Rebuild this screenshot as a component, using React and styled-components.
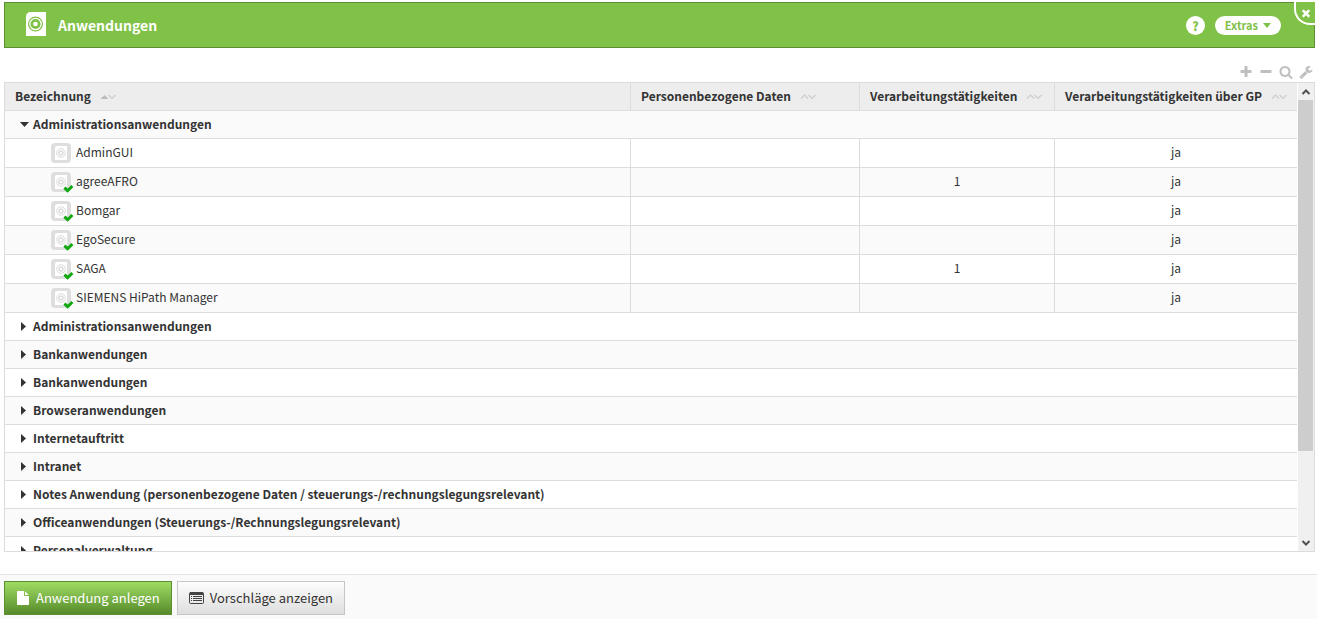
import React from 'react';
import styled, { createGlobalStyle } from 'styled-components';

const COLORS = {
  green: '#80c147',
  greenDark: '#5c8f2f',
  gray50: '#fafafa',
  gray100: '#ededed',
  gray300: '#dcdcdc',
  gray400: '#bfbfbf',
  text: '#333333',
  check: '#0fa80f',
  white: '#ffffff',
};

const PATHS = {
  plus: 'M1600 736v192q0 40-28 68t-68 28h-416v416q0 40-28 68t-68 28h-192q-40 0-68-28t-28-68v-416h-416q-40 0-68-28t-28-68v-192q0-40 28-68t68-28h416v-416q0-40 28-68t68-28h192q40 0 68 28t28 68v416h416q40 0 68 28t28 68z',
  minus: 'M1600 736v192q0 40-28 68t-68 28h-1216q-40 0-68-28t-28-68v-192q0-40 28-68t68-28h1216q40 0 68 28t28 68z',
  search: 'M1216 832q0-185-131.5-316.5t-316.5-131.5-316.5 131.5-131.5 316.5 131.5 316.5 316.5 131.5 316.5-131.5 131.5-316.5zm512 832q0 52-38 90t-90 38q-54 0-90-38l-343-342q-179 124-399 124-143 0-273.5-55.5t-225-150-150-225-55.5-273.5 55.5-273.5 150-225 225-150 273.5-55.5 273.5 55.5 225 150 150 225 55.5 273.5q0 220-124 399l343 343q37 37 37 90z',
  wrench: 'M448 1472q0-26-19-45t-45-19-45 19-19 45 19 45 45 19 45-19 19-45zm644-420l-682 682q-37 37-90 37-52 0-91-37l-106-108q-38-36-38-90 0-53 38-91l681-681q39 98 114.5 173.5t173.5 114.5zm634-435q0 39-23 106-47 134-164.5 217.5t-258.5 83.5q-185 0-316.5-131.5t-131.5-316.5 131.5-316.5 316.5-131.5q58 0 121.5 16.5t107.5 46.5q16 11 16 28t-16 28l-293 169v224l193 107q5-3 79-48.5t135.5-81 70.5-35.5q15 0 23.5 10t8.5 25z',
  times: 'M1490 1322q0 40-28 68l-136 136q-28 28-68 28t-68-28l-294-294-294 294q-28 28-68 28t-68-28l-136-136q-28-28-28-68t28-68l294-294-294-294q-28-28-28-68t28-68l136-136q28-28 68-28t68 28l294 294 294-294q28-28 68-28t68 28l136 136q28 28 28 68t-28 68l-294 294 294 294q28 28 28 68z',
  file: 'M1152 512v-472q22 14 36 28l408 408q14 14 28 36h-472zm-128 32q0 40 28 68t68 28h544v1056q0 40-28 68t-68 28h-1344q-40 0-68-28t-28-68v-1600q0-40 28-68t68-28h800v544z',
};

const GROUPS = [
  {
    name: 'Administrationsanwendungen',
    items: [
      { name: 'AdminGUI', count: '', viaGp: 'ja' },
      { name: 'agreeAFRO', checked: true, count: '1', viaGp: 'ja' },
      { name: 'Bomgar', checked: true, count: '', viaGp: 'ja' },
      { name: 'EgoSecure', checked: true, count: '', viaGp: 'ja' },
      { name: 'SAGA', checked: true, count: '1', viaGp: 'ja' },
      { name: 'SIEMENS HiPath Manager', checked: true, count: '', viaGp: 'ja' },
    ],
  },
  { name: 'Administrationsanwendungen' },
  { name: 'Bankanwendungen' },
  { name: 'Bankanwendungen' },
  { name: 'Browseranwendungen' },
  { name: 'Internetauftritt' },
  { name: 'Intranet' },
  { name: 'Notes Anwendung (personenbezogene Daten / steuerungs-/rechnungslegungsrelevant)' },
  { name: 'Officeanwendungen (Steuerungs-/Rechnungslegungsrelevant)' },
  { name: 'Personalverwaltung' },
];

const COLUMNS = [
  { label: 'Bezeichnung', sorted: true },
  { label: 'Personenbezogene Daten' },
  { label: 'Verarbeitungstätigkeiten' },
  { label: 'Verarbeitungstätigkeiten über GP' },
];

const GlobalStyle = createGlobalStyle`
  *,
  *::before,
  *::after {
    box-sizing: border-box;
  }
  body {
    margin: 0;
    color: ${COLORS.text};
    background: ${COLORS.white};
    font-family: 'Noto Sans CJK SC', 'Noto Sans', sans-serif;
    font-size: 12px;
    line-height: 16px;
  }
  button {
    margin: 0;
    padding: 0;
    border: none;
    background: none;
    color: inherit;
    font: inherit;
    cursor: pointer;
  }
  svg {
    display: block;
    flex: none;
    overflow: visible;
  }
`;

const Page = styled.div`
  height: 100vh;
  display: flex;
  flex-direction: column;
`;

const Header = styled.header`
  position: relative;
  flex: none;
  display: flex;
  align-items: center;
  height: 46px;
  margin: 2px 2px 0 4px;
  padding: 0 33px 0 21px;
  border: 1px solid ${COLORS.greenDark};
  background: ${COLORS.green};
  color: ${COLORS.white};
`;

const Title = styled.h1`
  flex: 1;
  margin: 0 0 0 12px;
  font-size: 14px;
  font-weight: 700;
  line-height: 20px;
`;

const HelpButton = styled.button`
  width: 19px;
  height: 19px;
  margin-right: 10px;
  border-radius: 50%;
  background: ${COLORS.white};
  color: ${COLORS.green};
  font-weight: 900;
  line-height: 19px;
`;

const ExtrasButton = styled.button`
  display: flex;
  align-items: center;
  gap: 5px;
  height: 19px;
  padding: 0 10px;
  border-radius: 10px;
  background: ${COLORS.white};
  color: ${COLORS.green};
  font-size: 11px;
  font-weight: 700;
`;

const CloseButton = styled.button`
  position: absolute;
  top: -1px;
  right: -1px;
  display: flex;
  align-items: center;
  justify-content: center;
  width: 21px;
  height: 23px;
  border: 2px solid ${COLORS.white};
  border-width: 0 0 2px 2px;
  border-bottom-left-radius: 16px;
  background: ${COLORS.green};
`;

const Tools = styled.div`
  flex: none;
  display: flex;
  justify-content: flex-end;
  gap: 6px;
  margin: 17px 4px 3px;
  color: ${COLORS.gray400};
`;

const Panel = styled.main`
  flex: 1;
  min-height: 0;
  display: flex;
  margin: 0 2px 22px 4px;
  border: 1px solid ${COLORS.gray300};
`;

const ScrollArea = styled.div`
  flex: 1;
  overflow-y: auto;
  scrollbar-width: none;
`;

const Scrollbar = styled.div`
  flex: none;
  display: flex;
  flex-direction: column;
  align-items: center;
  width: 17px;
  border-left: 1px solid ${COLORS.white};
  background: #f0f0f0;
  color: #505050;
`;

const ScrollThumb = styled.div`
  flex: 352 0 0;
  align-self: stretch;
  margin-right: 1px;
  background: #cdcdcd;
`;

const ScrollRest = styled.div`
  flex: 83 0 0;
`;

const ScrollArrow = styled.button`
  display: flex;
  align-items: center;
  justify-content: center;
  width: 15px;
  height: 17px;
`;

const Table = styled.table`
  width: 100%;
  table-layout: fixed;
  border-collapse: separate;
  border-spacing: 0;
`;

const Col = styled.col`
  width: ${(props) => props.$width};
`;

const HeadCell = styled.th`
  position: sticky;
  top: 0;
  z-index: 1;
  height: 28px;
  padding: 0 10px;
  border-right: 1px solid ${COLORS.gray300};
  border-bottom: 1px solid ${COLORS.gray300};
  background: ${COLORS.gray100};
  text-align: left;
  &:last-child {
    border-right: none;
  }
`;

const Label = styled.span`
  display: block;
  padding-bottom: 2px;
`;

const SortButton = styled.button`
  display: flex;
  align-items: center;
  gap: 9px;
  font-weight: 700;
  white-space: nowrap;
`;

const Row = styled.tr`
  &:nth-child(odd) {
    background: ${COLORS.gray50};
  }
`;

const GroupCell = styled.td`
  height: 28px;
  padding: 0 15px;
  border-bottom: 1px solid ${COLORS.gray300};
`;

const GroupButton = styled.button`
  display: flex;
  align-items: center;
  gap: 4px;
  font-weight: 700;
`;

const Cell = styled.td`
  height: 29px;
  padding: 0;
  border-right: 1px solid ${COLORS.gray300};
  border-bottom: 1px solid ${COLORS.gray300};
  text-align: center;
  &:last-child {
    border-right: none;
  }
`;

const ItemLabel = styled.div`
  display: flex;
  align-items: center;
  gap: 3px;
  padding-left: 46px;
`;

const Footer = styled.footer`
  flex: none;
  display: flex;
  gap: 5px;
  padding: 6px 4px 4px;
  border-top: 1px solid #e4e4e4;
  background: ${COLORS.gray50};
`;

const ActionButton = styled.button`
  display: flex;
  align-items: center;
  gap: 6px;
  height: 34px;
  padding: 0 11px;
  border: 1px solid #c6c6c6;
  background: linear-gradient(#fdfdfd, #dedede);
  font-size: 13px;
`;

const PrimaryButton = styled(ActionButton)`
  border-color: ${COLORS.greenDark};
  background: linear-gradient(#9fdc63, #578b2b);
  color: ${COLORS.white};
`;

const Icon = ({ id, size = 14 }) => (
  <svg width={size} height={size} viewBox="0 0 1792 1792" fill="currentColor" aria-hidden="true">
    <path d={PATHS[id]} />
  </svg>
);

const AppIcon = () => (
  <svg width="20" height="24" viewBox="0 0 20 24" aria-hidden="true">
    <path d="M5 -1H20V23H0V4Q0 -1 5 -1Z" fill={COLORS.white} />
    <g fill="none" stroke={COLORS.green}>
      <circle cx="9.5" cy="11" r="6.9" strokeWidth="1.2" />
      <circle cx="9.5" cy="11" r="3.7" strokeWidth="2.8" />
    </g>
  </svg>
);

const ItemIcon = ({ checked }) => (
  <svg width="22" height="22" viewBox="0 0 22 22" aria-hidden="true">
    <rect y="1" width="20" height="20" rx="4" fill="#dedede" />
    <path d="M6 4H16V18H4V6Q4 4 6 4Z" fill={COLORS.white} />
    <g fill="none" stroke="#dcdcdc">
      <circle cx="10" cy="11" r="4.3" />
      <circle cx="10" cy="11" r="2" strokeWidth="1.5" />
    </g>
    {checked && (
      <path d="M13.4 16.6L16.6 19.7L21.4 15" fill="none" stroke={COLORS.check} strokeWidth="3" />
    )}
  </svg>
);

const SortIcon = ({ sorted }) => (
  <svg width="16" height="6" viewBox="0 0 16 6" fill="none" stroke="#cccccc" strokeWidth="1.2" aria-hidden="true">
    {sorted ? <path d="M0.5 5L4.5 1L8.5 5Z" fill="#bbbbbb" stroke="none" /> : <path d="M1 4.5L4.5 1L8 4.5" />}
    <path d="M8.5 1L12 4.5L15.5 1" />
  </svg>
);

const ListIcon = () => (
  <svg width="15" height="12" viewBox="0 0 15 12" aria-hidden="true">
    <rect x="0.5" y="0.5" width="14" height="11" rx="1" fill="none" stroke="#444444" />
    <path d="M1 0H14V3H1Z" fill="#444444" />
    <path d="M2 4.5H3M4 4.5H13M2 6.5H3M4 6.5H13M2 8.5H3M4 8.5H13" stroke="#444444" />
  </svg>
);

const ExpandIcon = ({ open }) => (
  <svg width="9" height="10" viewBox="0 0 9 10" fill="currentColor" aria-hidden="true">
    <path d={open ? 'M0 2H9L4.5 7Z' : 'M1 0L6 4.5L1 9Z'} />
  </svg>
);

const ScrollIcon = ({ down }) => (
  <svg width="8" height="6" viewBox="0 0 8 6" fill="none" stroke="currentColor" strokeWidth="2" aria-hidden="true">
    <path d={down ? 'M0.5 1L4 4.5L7.5 1' : 'M0.5 5L4 1.5L7.5 5'} />
  </svg>
);

const Group = ({ group }) => {
  const items = group.items ?? [];
  const open = items.length > 0;

  return (
    <>
      <Row>
        <GroupCell colSpan={4}>
          <GroupButton aria-expanded={open}>
            <ExpandIcon open={open} />
            <Label>{group.name}</Label>
          </GroupButton>
        </GroupCell>
      </Row>
      {items.map((item) => (
        <Row key={item.name}>
          <Cell>
            <ItemLabel>
              <ItemIcon checked={item.checked} />
              <Label>{item.name}</Label>
            </ItemLabel>
          </Cell>
          <Cell />
          <Cell><Label>{item.count}</Label></Cell>
          <Cell><Label>{item.viaGp}</Label></Cell>
        </Row>
      ))}
    </>
  );
};

const App = () => (
  <Page>
    <GlobalStyle />
    <Header>
      <AppIcon />
      <Title>Anwendungen</Title>
      <HelpButton aria-label="Hilfe">?</HelpButton>
      <ExtrasButton>
        Extras
        <svg width="8" height="5" viewBox="0 0 8 5" fill="currentColor" aria-hidden="true">
          <path d="M0 0H8L4 5Z" />
        </svg>
      </ExtrasButton>
      <CloseButton aria-label="Schließen">
        <Icon id="times" size={12} />
      </CloseButton>
    </Header>

    <Tools>
      <button aria-label="Alle aufklappen"><Icon id="plus" /></button>
      <button aria-label="Alle zuklappen"><Icon id="minus" /></button>
      <button aria-label="Suchen"><Icon id="search" /></button>
      <button aria-label="Einstellungen"><Icon id="wrench" /></button>
    </Tools>

    <Panel>
      <ScrollArea>
        <Table>
          <colgroup>
            <Col $width="auto" />
            <Col $width="229px" />
            <Col $width="195px" />
            <Col $width="242px" />
          </colgroup>
          <thead>
            <tr>
              {COLUMNS.map((column) => (
                <HeadCell key={column.label}>
                  <SortButton>
                    <Label>{column.label}</Label>
                    <SortIcon sorted={column.sorted} />
                  </SortButton>
                </HeadCell>
              ))}
            </tr>
          </thead>
          <tbody>
            {GROUPS.map((group, index) => (
              <Group key={index} group={group} />
            ))}
          </tbody>
        </Table>
      </ScrollArea>
      <Scrollbar>
        <ScrollArrow aria-label="Nach oben"><ScrollIcon /></ScrollArrow>
        <ScrollThumb />
        <ScrollRest />
        <ScrollArrow aria-label="Nach unten"><ScrollIcon down /></ScrollArrow>
      </Scrollbar>
    </Panel>

    <Footer>
      <PrimaryButton>
        <Icon id="file" />
        Anwendung anlegen
      </PrimaryButton>
      <ActionButton>
        <ListIcon />
        Vorschläge anzeigen
      </ActionButton>
    </Footer>
  </Page>
);

export default App;
